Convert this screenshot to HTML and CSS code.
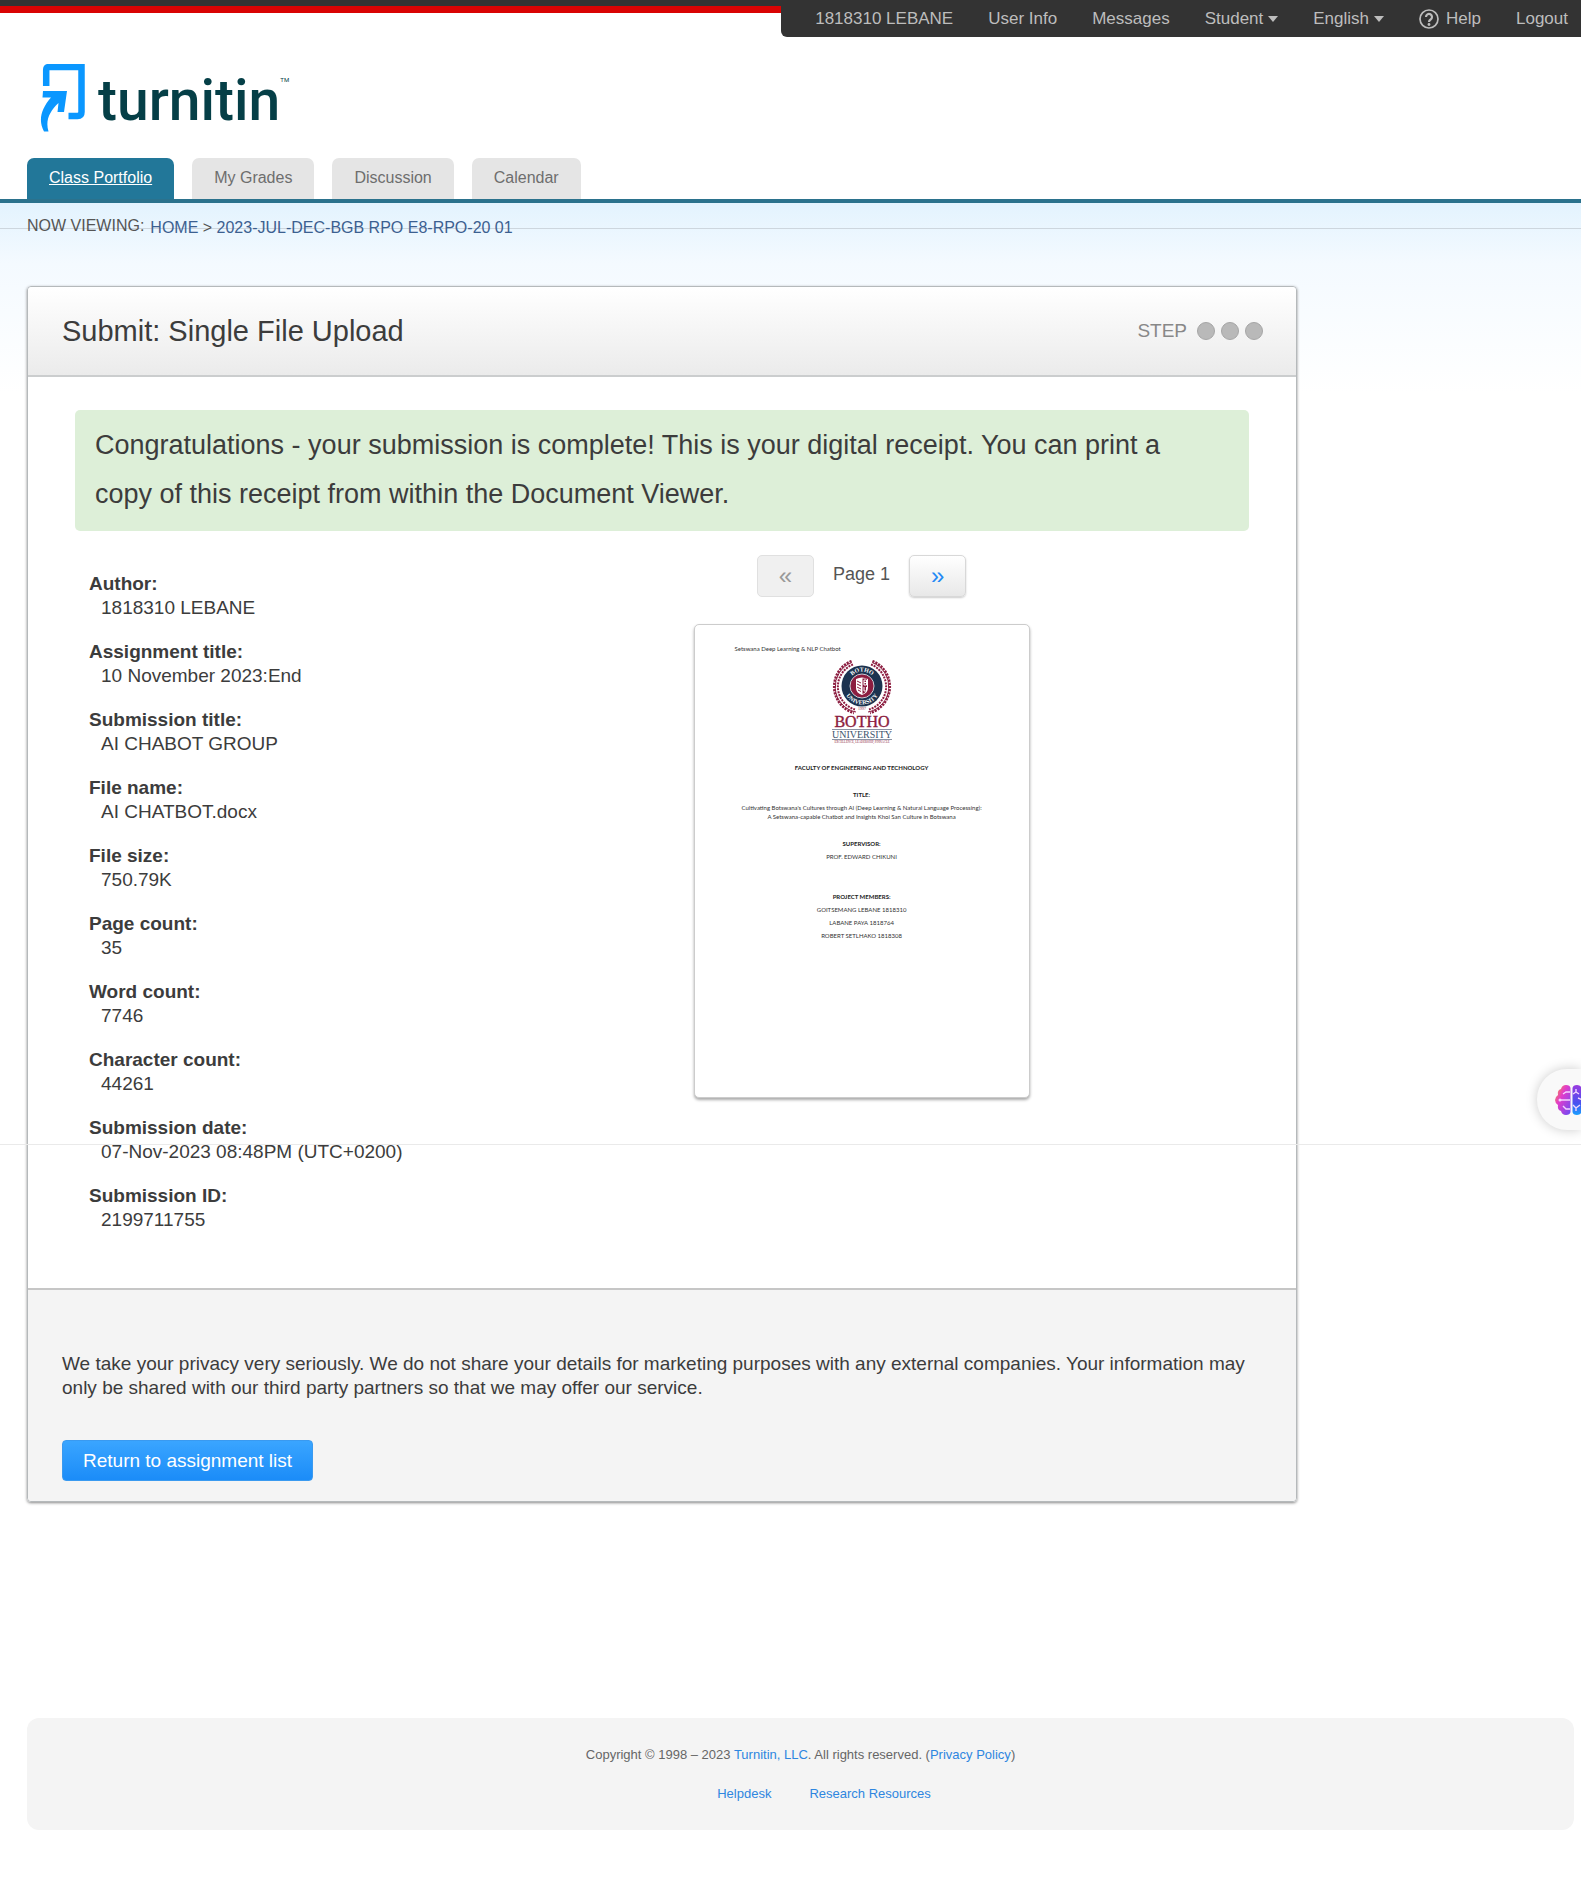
FILE: index.html
```html
<!DOCTYPE html>
<html lang="en">
<head>
<meta charset="utf-8">
<meta name="viewport" content="width=device-width, initial-scale=1">
<title>Turnitin - Digital Receipt</title>
<link rel="stylesheet" href="styles.css">
</head>
<body>
<header class="site-header">
  <div class="topbar">
    <nav class="user-nav" aria-label="Account">
      <a href="#">1818310 LEBANE</a>
      <a href="#">User Info</a>
      <a href="#">Messages</a>
      <button type="button" class="menu-button">Student <span class="caret"></span></button>
      <button type="button" class="menu-button">English <span class="caret"></span></button>
      <a href="#" class="help"><svg class="help-icon" viewBox="0 0 20 20" aria-hidden="true"><circle cx="10" cy="10" r="9" fill="none" stroke="currentColor" stroke-width="1.700"/><path d="M7 8a3 3 0 1 1 4.600 2.500Q10 11.500 10 13" fill="none" stroke="currentColor" stroke-width="2.200"/><circle cx="10" cy="15.500" r="1.400" fill="currentColor"/></svg>Help</a>
      <a href="#">Logout</a>
    </nav>
  </div>
  <a class="brand" href="#" aria-label="turnitin">
    <svg class="brand-mark" viewBox="0 0 46 68" aria-hidden="true">
      <path d="M6.200 22V6q0-3 3-3H41.500V48q0 4-4 4H28.500" fill="none" stroke="#0a97ff" stroke-width="6.500"/>
      <path d="M3 27H27L24 48H17.500L18.500 39C10 47 5 56 8.500 67.500H4C-2 56 1 45 11 33.500H2.500Z" fill="#0a97ff"/>
    </svg>
    <span class="brand-name">turnitin</span><span class="brand-tm">TM</span>
  </a>
  <nav class="tabs" aria-label="Main">
    <a class="tab tab-active" href="#">Class Portfolio</a>
    <a class="tab" href="#">My Grades</a>
    <a class="tab" href="#">Discussion</a>
    <a class="tab" href="#">Calendar</a>
  </nav>
</header>

<div class="page">
  <div class="breadcrumb">
    <span class="breadcrumb-label">NOW VIEWING:</span>
    <span class="breadcrumb-path"><a href="#">HOME</a> &gt; <a href="#">2023-JUL-DEC-BGB RPO E8-RPO-20 01</a></span>
  </div>

  <main class="panel">
    <div class="panel-header">
      <h1>Submit: Single File Upload</h1>
      <div class="steps">STEP <span class="dots"><i></i><i></i><i></i></span></div>
    </div>
    <div class="panel-body">
      <p class="notice">Congratulations - your submission is complete! This is your digital receipt. You can print a copy of this receipt from within the Document Viewer.</p>
      <div class="columns">
        <dl class="details">
          <div><dt>Author:</dt><dd>1818310 LEBANE</dd></div>
          <div><dt>Assignment title:</dt><dd>10 November 2023:End</dd></div>
          <div><dt>Submission title:</dt><dd>AI CHABOT GROUP</dd></div>
          <div><dt>File name:</dt><dd>AI CHATBOT.docx</dd></div>
          <div><dt>File size:</dt><dd>750.79K</dd></div>
          <div><dt>Page count:</dt><dd>35</dd></div>
          <div><dt>Word count:</dt><dd>7746</dd></div>
          <div><dt>Character count:</dt><dd>44261</dd></div>
          <div><dt>Submission date:</dt><dd>07-Nov-2023 08:48PM (UTC+0200)</dd></div>
          <div><dt>Submission ID:</dt><dd>2199711755</dd></div>
        </dl>
        <section class="preview">
          <div class="pager">
            <button type="button" class="pager-button" aria-label="Previous page" disabled>«</button>
            <span>Page 1</span>
            <button type="button" class="pager-button" aria-label="Next page">»</button>
          </div>
          <article class="sheet">
            <p class="sheet-running">Setswana Deep Learning &amp; NLP Chatbot</p>
            <svg class="crest" viewBox="0 0 60 84" role="img" aria-label="Botho University">
              <g fill="none" stroke="#8c1d40">
                <path d="M20 2.500A25.800 25.800 0 0 0 24 52M40 2.500A25.800 25.800 0 0 1 36 52" stroke-width="1"/>
                <path d="M19.500 1A27.500 27.500 0 0 0 22 53M40.500 1A27.500 27.500 0 0 1 38 53" stroke-width="2.400" stroke-dasharray="2.200 1"/>
                <path d="M21 4.500A23.800 23.800 0 0 0 23 49.500M39 4.500A23.800 23.800 0 0 1 37 49.500" stroke-width="2" stroke-dasharray="2 1"/>
              </g>
              <circle cx="30" cy="26" r="20.500" fill="#1c3350"/>
              <path id="arc-top" d="M15.500 26A14.500 14.500 0 0 1 44.500 26" fill="none"/>
              <path id="arc-bottom" d="M11.500 26A18.500 18.500 0 0 0 48.500 26" fill="none"/>
              <text class="crest-ring"><textPath href="#arc-top" startOffset="50%">BOTHO</textPath></text>
              <text class="crest-ring"><textPath href="#arc-bottom" startOffset="50%">UNIVERSITY</textPath></text>
              <circle cx="30" cy="26" r="12" fill="#8c1d40" stroke="#c9cdd6" stroke-width="1"/>
              <path d="M24 19q6-3 12 0V28q0 5-6 7q-6-2-6-7Z" fill="#fff"/>
              <path d="M30.500 18.500H35V28q0 4-4.500 6Z" fill="#8c1d40"/>
              <path d="M25 21l4 2M25 24l4 2M25 27l4 2M26 30l3 1.500" fill="none" stroke="#8c1d40" stroke-width="1"/>
              <path d="M32 20V25H34.500V20ZM32 22.500H34.500M32 27V31H34.500V27" fill="none" stroke="#fff" stroke-width="1"/>
              <text class="crest-year" x="30" y="50">1997</text>
              <text class="crest-botho" x="30" y="67">BOTHO</text>
              <path d="M0 69.500H60M0 79.500H60" stroke="#8a93a3" stroke-width="1"/>
              <text class="crest-university" x="30" y="78">UNIVERSITY</text>
              <text class="crest-motto" x="30" y="83">EXCELLENCE, LEADERSHIP, PINNACLE</text>
            </svg>
            <h2 class="sheet-faculty">FACULTY OF ENGINEERING AND TECHNOLOGY</h2>
            <h3>TITLE:</h3>
            <p class="sheet-title">Cultivating Botswana's Cultures through AI (Deep Learning &amp; Natural Language Processing):<br>A Setswana-capable Chatbot and Insights Khoi San Culture in Botswana</p>
            <h3>SUPERVISOR:</h3>
            <p>PROF. EDWARD CHIKUNI</p>
            <h3 class="sheet-members">PROJECT MEMBERS:</h3>
            <p>GOITSEMANG LEBANE 1818310</p>
            <p>LABANE PAYA 1818764</p>
            <p>ROBERT SETLHAKO 1818308</p>
          </article>
        </section>
      </div>
    </div>
    <div class="panel-footer">
      <p>We take your privacy very seriously. We do not share your details for marketing purposes with any external companies. Your information may only be shared with our third party partners so that we may offer our service.</p>
      <button type="button" class="primary-button">Return to assignment list</button>
    </div>
  </main>

  <footer class="site-footer">
    <p>Copyright © 1998 – 2023 <a href="#">Turnitin, LLC</a>. All rights reserved. (<a href="#">Privacy Policy</a>)</p>
    <ul>
      <li><a href="#">Helpdesk</a></li>
      <li><a href="#">Research Resources</a></li>
    </ul>
  </footer>
</div>

<div class="seam" aria-hidden="true"></div>
<button type="button" class="assistant" aria-label="Assistant">
  <svg viewBox="0 0 38 32" aria-hidden="true">
    <defs>
      <linearGradient id="brain-left" x1="0" y1="0" x2="1" y2="1"><stop offset="0" stop-color="#ff9a2e"/><stop offset=".400" stop-color="#e23ccb"/><stop offset="1" stop-color="#6a4cf5"/></linearGradient>
      <linearGradient id="brain-right" x1="0" y1="0" x2="0" y2="1"><stop offset="0" stop-color="#9a3be0"/><stop offset=".600" stop-color="#4a50f0"/><stop offset="1" stop-color="#19a0ff"/></linearGradient>
    </defs>
    <path d="M15.500 4Q15 1 11 1Q7 1 6 5Q2 6 3 11Q0 13 0 16Q0 19 3 21Q2 26 6 27Q7 31 11 31Q15 31 15.500 28Z" fill="url(#brain-left)"/>
    <path d="M17.500 4Q18 1 22 1Q26 1 27 5Q31 6 30 11Q33 13 33 16Q33 19 30 21Q31 26 27 27Q26 31 22 31Q18 31 17.500 28Z" fill="url(#brain-right)"/>
    <path d="M15 8H11L8 10M15 16H6M15 25H11L8 22M18 10L21 8V5M21 8L24 10M23 14L28 16M18 21L21 24V27M21 24L25 21" fill="none" stroke="#f3d5ff" stroke-width="1.400"/>
    <circle cx="5" cy="16" r="1.500" fill="#f3d5ff"/>
  </svg>
</button>
</body>
</html>
```
FILE: styles.css
```css
* { box-sizing: border-box; }

body {
  position: relative;
  margin: 0;
  overflow-x: hidden;
  background: #fff;
  color: #3c3c3c;
  font-family: "Liberation Sans", Arial, sans-serif;
  font-size: 19px;
  line-height: 24px;
}

h1, h2, h3, p, dl, dd, ul { margin: 0; padding: 0; }
a { color: #2e86e0; text-decoration: none; }
button { font: inherit; cursor: pointer; }

/* Top bar */
.site-header { border-bottom: 4px solid #2b728d; }

.topbar {
  display: flex;
  justify-content: flex-end;
  height: 37px;
  background: linear-gradient(#333 6px, #d90404 6px, #d90404 13px, #fff 13px);
}

.user-nav {
  display: flex;
  align-items: center;
  gap: 35px;
  padding: 0 13px 0 34px;
  border-radius: 0 0 0 6px;
  background: #333;
  font-size: 17px;
}

.user-nav a, .menu-button { color: #bdbdbd; }

.menu-button {
  display: flex;
  align-items: center;
  gap: 5px;
  padding: 0;
  border: 0;
  background: none;
}

.caret {
  border: 5px solid transparent;
  border-top: 6px solid #bdbdbd;
  border-bottom: 0;
}

.user-nav .help { display: flex; align-items: center; gap: 7px; }
.help-icon { width: 20px; height: 20px; }

/* Brand */
.brand {
  display: flex;
  align-items: flex-start;
  width: max-content;
  padding: 27px 0 20px 40px;
  color: #053f47;
  font-family: Roboto, sans-serif;
}

.brand-mark { width: 46px; height: 68px; }
.brand-name { margin-left: 12px; font-size: 57px; font-weight: 500; line-height: 74px; }
.brand-tm { margin-top: 12px; font-size: 6px; line-height: 8px; }

/* Tabs */
.tabs { display: flex; gap: 18px; padding-left: 27px; }

.tab {
  height: 41px;
  padding: 0 22px;
  border-radius: 7px 7px 0 0;
  background: #e5e5e5;
  color: #6e6e6e;
  font-size: 16px;
  line-height: 40px;
}

.tab-active { background: #227799; color: #fff; text-decoration: underline; }

/* Page */
.page {
  padding: 0 7px 50px 27px;
  background: linear-gradient(#e3f3fe, #f4faff 60px, #fff 190px);
}

.breadcrumb {
  display: flex;
  gap: 6px;
  height: 83px;
  margin: 0 -7px 0 -27px;
  padding: 11px 0 0 27px;
  background: linear-gradient(#cdd6de, #cdd6de) 0 25px / 100% 1px no-repeat;
  color: #555;
  font-size: 16px;
}

.breadcrumb-path { padding-top: 2px; }
.breadcrumb-label, .breadcrumb-path { white-space: nowrap; }
.breadcrumb a { color: #3c6090; }

/* Panel */
.panel {
  max-width: 1270px;
  border: 1px solid #b5b9bb;
  border-radius: 4px;
  box-shadow: 0 1px 3px #888;
}

.panel-header {
  display: flex;
  align-items: center;
  justify-content: space-between;
  height: 90px;
  padding: 0 33px 0 34px;
  border-bottom: 2px solid #cbcdce;
  border-radius: 4px 4px 0 0;
  background: linear-gradient(#fff, #ebebeb);
}

h1 { font-size: 29px; font-weight: 400; line-height: 36px; }
.steps { display: flex; align-items: center; gap: 10px; color: #888; }
.dots { display: flex; gap: 6px; }
.dots i { width: 18px; height: 18px; border: 1px solid #a6a6a6; border-radius: 50%; background: #b9b9b9; }

.panel-body { padding: 33px 47px 56px; background: #fff; }

.notice {
  padding: 11px 60px 12px 20px;
  border-radius: 5px;
  background: #ddefd8;
  font-size: 27px;
  line-height: 49px;
}

.columns { display: grid; grid-template-columns: 34% 66%; padding-top: 24px; }

.details { display: grid; align-content: start; gap: 20px; padding: 17px 0 0 14px; }
dt { font-weight: 700; }
dd { padding-left: 12px; }

.preview { display: flex; flex-direction: column; align-items: center; gap: 27px; }
.pager { display: flex; align-items: center; gap: 19px; color: #555; font-size: 18px; }
.pager span { padding-bottom: 4px; }

.pager-button {
  width: 57px;
  height: 42px;
  border: 1px solid #d8d8d8;
  border-radius: 5px;
  background: linear-gradient(#fff, #e8e8e8);
  box-shadow: 0 1px 2px #ccc;
  color: #2389f5;
  font-size: 24px;
}

.pager-button:disabled { border-color: #e0e0e0; background: #f0f0f0; box-shadow: none; color: #999; }

/* Document thumbnail */
.sheet {
  width: 336px;
  min-height: 474px;
  padding: 19px 40px;
  border: 1px solid #ccc;
  border-radius: 5px;
  background: #fff;
  box-shadow: 0 2px 3px #aaa;
  color: #333;
  font-family: Lato, sans-serif;
  font-size: 6px;
  line-height: 9px;
  text-align: center;
  white-space: nowrap;
}

.sheet p { margin-bottom: 4px; }
.sheet .sheet-running { margin-bottom: 7px; text-align: left; }
.crest { display: block; width: 60px; height: 84px; margin: 0 auto; }
.sheet h2, .sheet h3 { color: #222; font-size: 6px; font-weight: 700; }
.sheet h3 { margin: 18px 0 4px; }
.sheet .sheet-faculty { margin-top: 19px; }
.sheet .sheet-title { display: flow-root; }
.sheet .sheet-members { margin-top: 31px; }

.crest text { text-anchor: middle; font-family: "Liberation Serif", serif; }
.crest-ring { fill: #fff; font-size: 6px; font-weight: 700; }
.crest-year { fill: #8c1d40; font-size: 4px; }
.crest-botho { fill: #8c1d40; stroke: #8c1d40; stroke-width: .4; font-size: 16px; }
.crest-university { fill: #40546e; font-size: 10px; }
.crest-motto { fill: #8c1d40; font-size: 3px; }

/* Panel footer */
.panel-footer {
  padding: 62px 34px 20px;
  border-top: 2px solid #c6c6c6;
  border-radius: 0 0 4px 4px;
  background: #f4f4f4;
}

.primary-button {
  display: block;
  height: 41px;
  margin-top: 40px;
  padding: 0 20px;
  border: 1px solid #3a9af0;
  border-radius: 4px;
  background: linear-gradient(#3aa5ff, #1b8cf8);
  color: #fff;
}

/* Site footer */
.site-footer {
  margin-top: 216px;
  padding: 25px 20px 19px;
  border-radius: 12px;
  background: #f4f4f4;
  color: #666;
  font-size: 13px;
  text-align: center;
}

.site-footer ul {
  display: flex;
  justify-content: center;
  gap: 38px;
  padding: 15px 0 5px 47px;
  list-style: none;
}

/* Full-width hairline across the page */
.seam { position: absolute; top: 1144px; left: 0; right: 0; height: 1px; background: #eaeaea; }

/* Floating assistant tab, partly past the window edge */
.assistant {
  position: absolute;
  top: 1069px;
  right: 0;
  width: 44px;
  height: 61px;
  padding: 0 0 0 18px;
  overflow: hidden;
  border: 0;
  border-radius: 30px 0 0 30px;
  background: #f9f9f9;
  box-shadow: 0 0 12px #ccc;
}

.assistant svg { display: block; width: 38px; height: 32px; }
```
